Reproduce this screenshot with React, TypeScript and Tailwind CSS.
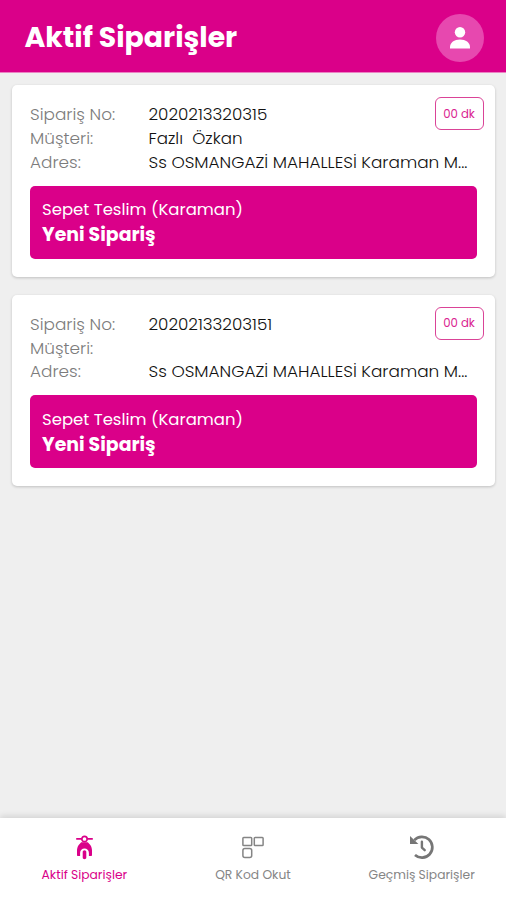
type Order = { no: string; customer: string };

const orders: Order[] = [
  { no: "2020213320315", customer: "Fazlı\u00a0 Özkan" },
  { no: "20202133203151", customer: "" },
];

function PersonIcon() {
  return (
    <svg width="20" height="22" viewBox="0 0 20 22" fill="#fff">
      <circle cx="10" cy="5.3" r="5.2" />
      <path d="M0 21.6v-1.4c0-4.6 4.3-7.7 10-7.7s10 3.1 10 7.7v1.4z" />
    </svg>
  );
}

function ScooterIcon() {
  return (
    <svg width="17" height="25" viewBox="0 0 17 25" fill="#da0089">
      <path d="M0.2 2.9H5.4v1.9H0.2zM11.6 2.9h5.2v1.9h-5.2z" />
      <circle cx="8.5" cy="4" r="2.7" fill="none" stroke="#da0089" strokeWidth="1.7" />
      <path d="M5.2 7.2h6.6l2.5 2.7c1.2 1.7 1.7 3.6 1.7 5.7v4.4c0 .6-.4 1-1 1h-2.1v-3.1c0-2.4-2-4.3-4.4-4.3s-4.4 1.9-4.4 4.3V21H2c-.6 0-1-.4-1-1v-4.4c0-2.1.5-4 1.7-5.7z" />
      <path d="M6.7 17c0-1 .8-1.7 1.8-1.7s1.8.7 1.8 1.7v5.5c0 1-.8 1.7-1.8 1.7s-1.8-.7-1.8-1.7z" />
    </svg>
  );
}

function BlocksIcon() {
  return (
    <svg width="22" height="23" viewBox="0 0 22 23" fill="none" stroke="#858585" strokeWidth="1.5">
      <rect x="0.9" y="1.4" width="8.8" height="8.2" rx="0.8" />
      <rect x="12.3" y="1.4" width="8.8" height="8.2" rx="0.8" />
      <rect x="0.9" y="12.4" width="8.8" height="9.2" rx="2" />
    </svg>
  );
}

function HistoryIcon() {
  return (
    <svg width="25" height="25" viewBox="0 0 25 25" fill="none" stroke="#767676">
      <path d="M5.3 5.2A10.4 10.4 0 1 1 6 20" strokeWidth="2.7" />
      <path d="M1 .9v8.2h8.4z" fill="#767676" stroke="none" />
      <path d="M12.9 6.8v5.8l2.8 2.6" strokeWidth="2.4" strokeLinecap="round" strokeLinejoin="round" />
    </svg>
  );
}

function OrderCard({ order }: { order: Order }) {
  return (
    <article className="relative h-[191.5px] rounded-[5px] bg-white px-[18px] pt-[17.4px] shadow-[0_1px_3px_rgba(0,0,0,0.2)]">
      <dl className="grid auto-rows-[23.7px] grid-cols-[118.5px_1fr] text-[16.9px] leading-[24px] font-light whitespace-nowrap text-[#111]">
        <dt className="text-[#7c7c7c]">Sipariş No:</dt>
        <dd className="text-[16.75px]">{order.no}</dd>
        <dt className="text-[#7c7c7c]">Müşteri:</dt>
        <dd className="text-[16.7px]">{order.customer}</dd>
        <dt className="text-[#7c7c7c]">Adres:</dt>
        <dd>Ss OSMANGAZİ MAHALLESİ Karaman M...</dd>
      </dl>
      <div className="mt-[12.5px] h-[73px] w-[447px] rounded-[5px] bg-[#da0089] px-3 pt-[12.3px] text-white">
        <p className="text-[16.5px] leading-6">Sepet Teslim (Karaman)</p>
        <p className="text-[18.9px] leading-[25.2px] font-bold">Yeni Sipariş</p>
      </div>
      <span className="absolute top-3 right-[11.5px] flex h-[33px] w-[49px] items-center justify-center rounded-[6px] border border-[#da4397] pt-[2px] text-[11.7px] text-[#da2490]">
        00 dk
      </span>
    </article>
  );
}

export default function App() {
  return (
    <div className="flex h-[900px] w-[506px] flex-col overflow-hidden bg-[#efefef] font-['Poppins','Inter',sans-serif]">
      <header className="flex h-[73px] shrink-0 items-center justify-between border-b border-[#eb82c3] bg-[#da0089] pt-[3px] pr-[22.5px] pl-[24.5px]">
        <h1 className="mb-[2px] text-[28.3px] leading-[42px] font-bold text-white">Aktif Siparişler</h1>
        <div className="flex size-12 items-center justify-center rounded-full bg-[#e748af]">
          <PersonIcon />
        </div>
      </header>
      <main className="flex grow flex-col gap-[18px] pt-3 pr-[11px] pl-3">
        {orders.map((order) => (
          <OrderCard key={order.no} order={order} />
        ))}
      </main>
      <nav className="grid h-[82px] shrink-0 grid-cols-3 bg-white text-[12.3px] text-[#858585] shadow-[0_-2px_6px_rgba(0,0,0,0.12)]">
        <a className="flex flex-col items-center pt-4 text-[#da0089]">
          <span className="flex h-[26px] items-center"><ScooterIcon /></span>
          <span className="mt-[5px] leading-[19px]">Aktif Siparişler</span>
        </a>
        <a className="flex flex-col items-center pt-4">
          <span className="flex h-[26px] items-center"><BlocksIcon /></span>
          <span className="mt-[5px] leading-[19px]">QR Kod Okut</span>
        </a>
        <a className="flex flex-col items-center pt-4">
          <span className="flex h-[26px] items-center"><HistoryIcon /></span>
          <span className="mt-[5px] leading-[19px]">Geçmiş Siparişler</span>
        </a>
      </nav>
    </div>
  );
}
